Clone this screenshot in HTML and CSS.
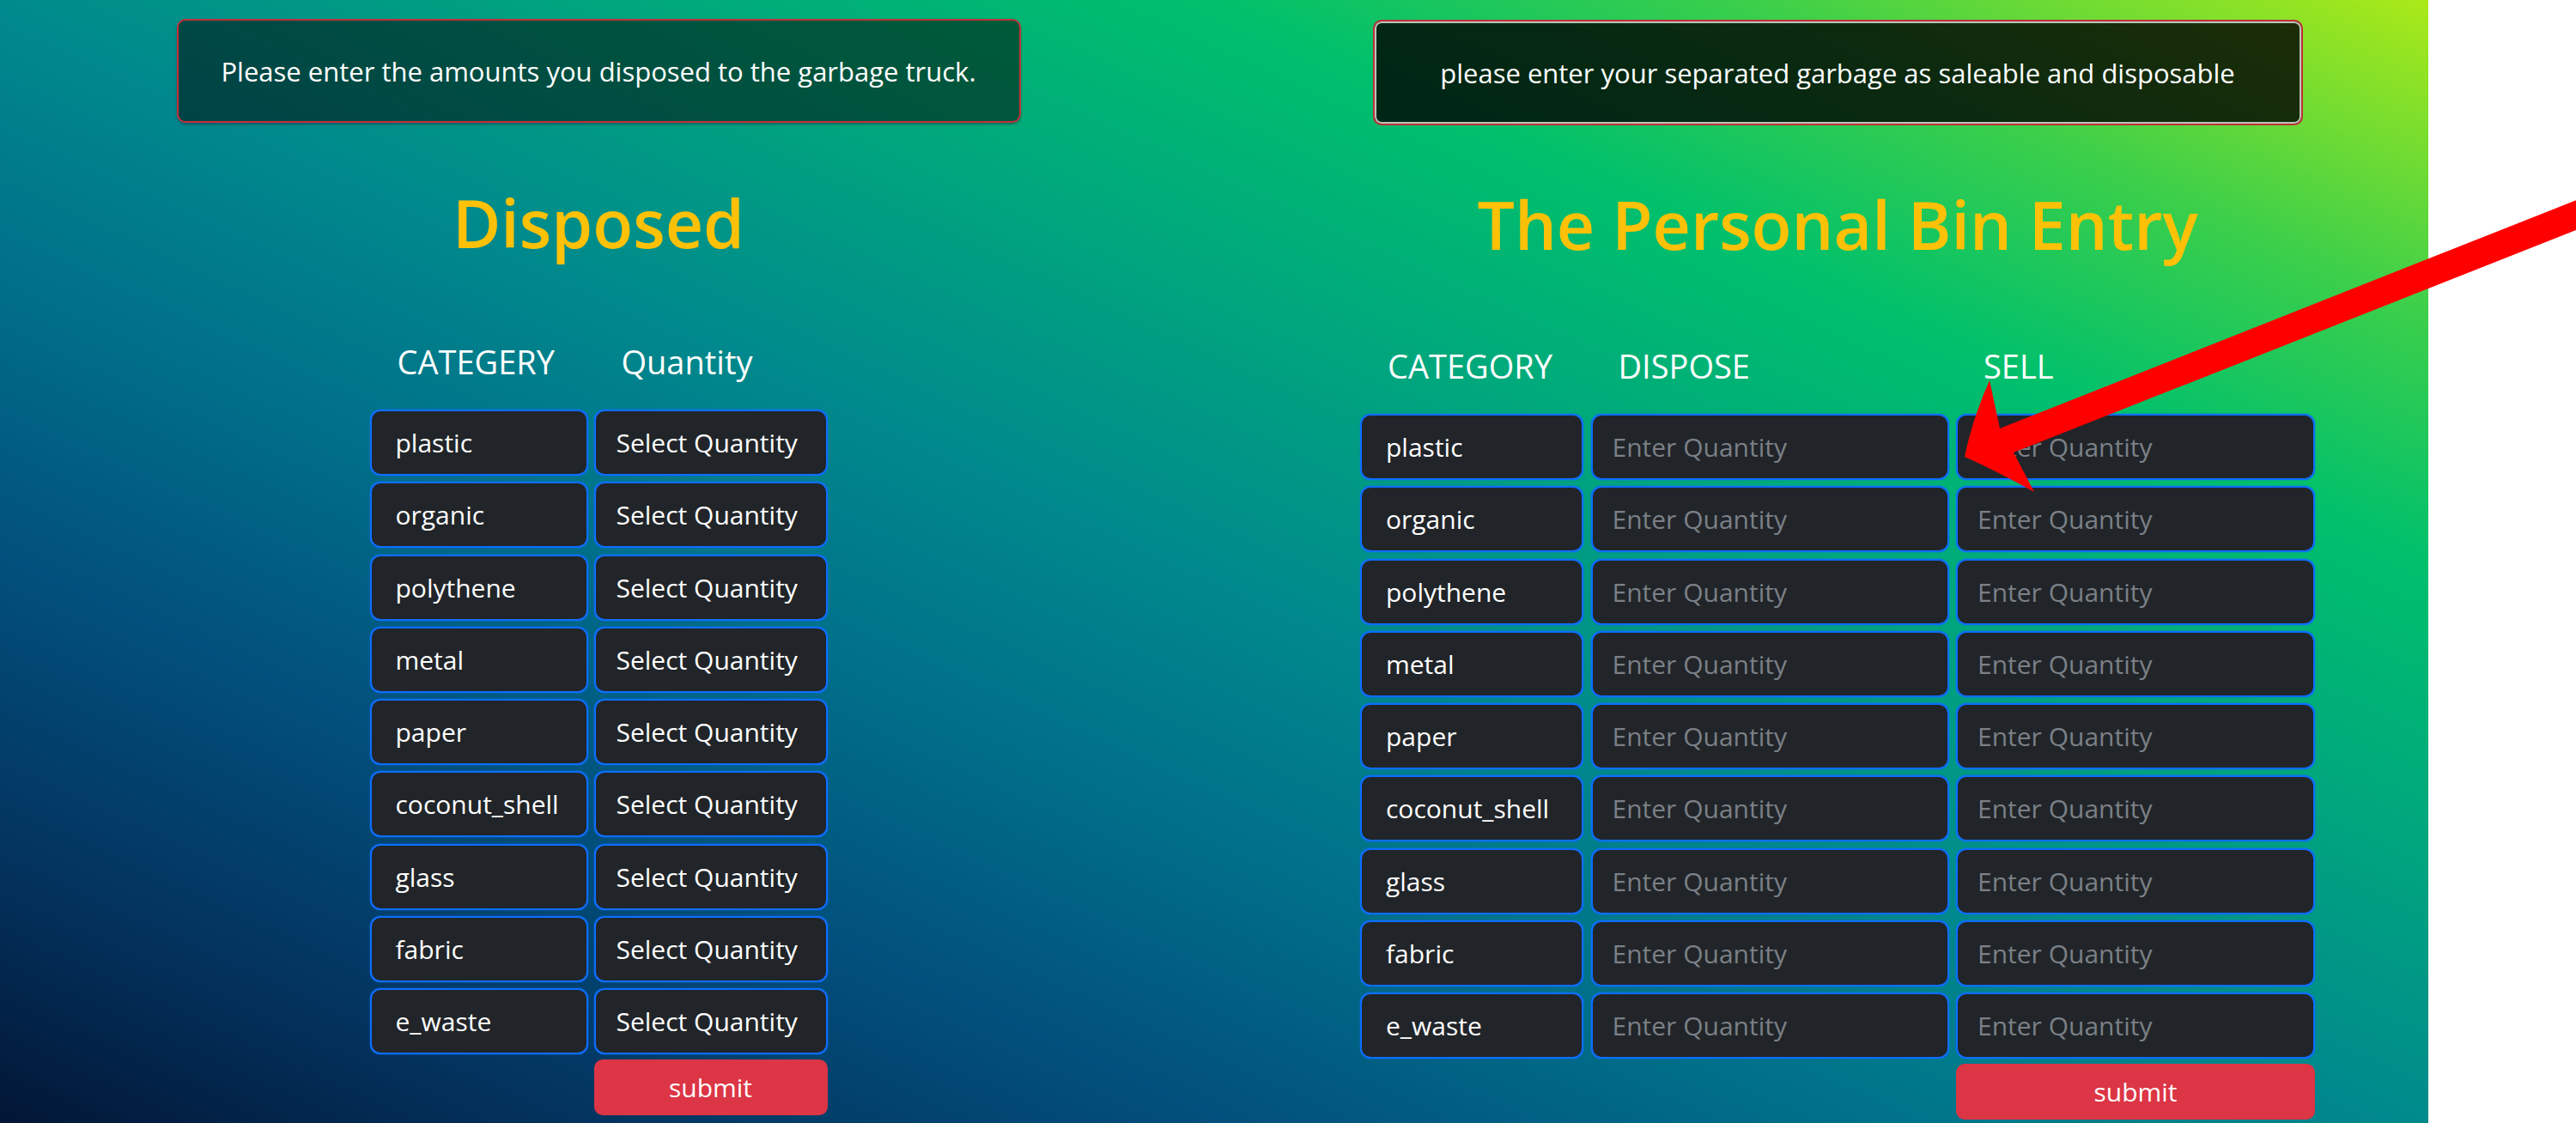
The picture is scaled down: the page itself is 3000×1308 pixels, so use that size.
FILE: index.html
```html
<!DOCTYPE html>
<html lang="en">
<head>
<meta charset="utf-8">
<title>Garbage Entry</title>
<link rel="stylesheet" href="styles.css">
</head>
<body>
<div class="page">
  <main class="canvas">
    <section class="col col-left">
      <div class="notice notice-left">Please enter the amounts you disposed to the garbage truck.</div>
      <h1 class="title title-left">Disposed</h1>
      <div class="tbl tbl-left">
        <div class="th">CATEGERY</div>
        <div class="th">Quantity</div>

        <div class="cell cat">plastic</div><div class="cell qty">Select Quantity</div>
        <div class="cell cat">organic</div><div class="cell qty">Select Quantity</div>
        <div class="cell cat">polythene</div><div class="cell qty">Select Quantity</div>
        <div class="cell cat">metal</div><div class="cell qty">Select Quantity</div>
        <div class="cell cat">paper</div><div class="cell qty">Select Quantity</div>
        <div class="cell cat">coconut_shell</div><div class="cell qty">Select Quantity</div>
        <div class="cell cat">glass</div><div class="cell qty">Select Quantity</div>
        <div class="cell cat">fabric</div><div class="cell qty">Select Quantity</div>
        <div class="cell cat">e_waste</div><div class="cell qty">Select Quantity</div>

        <button class="submit submit-left" type="button">submit</button>
      </div>
    </section>

    <section class="col col-right">
      <div class="notice notice-right">please enter your separated garbage as saleable and disposable</div>
      <h1 class="title title-right">The Personal Bin Entry</h1>
      <div class="tbl tbl-right">
        <div class="th">CATEGORY</div>
        <div class="th">DISPOSE</div>
        <div class="th">SELL</div>

        <div class="cell cat">plastic</div><input class="cell inp" placeholder="Enter Quantity"><input class="cell inp" placeholder="Enter Quantity">
        <div class="cell cat">organic</div><input class="cell inp" placeholder="Enter Quantity"><input class="cell inp" placeholder="Enter Quantity">
        <div class="cell cat">polythene</div><input class="cell inp" placeholder="Enter Quantity"><input class="cell inp" placeholder="Enter Quantity">
        <div class="cell cat">metal</div><input class="cell inp" placeholder="Enter Quantity"><input class="cell inp" placeholder="Enter Quantity">
        <div class="cell cat">paper</div><input class="cell inp" placeholder="Enter Quantity"><input class="cell inp" placeholder="Enter Quantity">
        <div class="cell cat">coconut_shell</div><input class="cell inp" placeholder="Enter Quantity"><input class="cell inp" placeholder="Enter Quantity">
        <div class="cell cat">glass</div><input class="cell inp" placeholder="Enter Quantity"><input class="cell inp" placeholder="Enter Quantity">
        <div class="cell cat">fabric</div><input class="cell inp" placeholder="Enter Quantity"><input class="cell inp" placeholder="Enter Quantity">
        <div class="cell cat">e_waste</div><input class="cell inp" placeholder="Enter Quantity"><input class="cell inp" placeholder="Enter Quantity">

        <button class="submit submit-right" type="button">submit</button>
      </div>
    </section>
  </main>
  <aside class="gutter"></aside>

  <svg class="arrow" width="3000" height="1308" viewBox="0 0 3000 1308" aria-hidden="true">
    <path d="M2288 532 Q2297 488 2317 443 L2329 499 L3026 223 L3038 253 L2345 527 L2369 573 Q2326 549 2288 532 Z" fill="#ff0000"/>
  </svg>
</div>
</body>
</html>
```

FILE: styles.css
```css
* { box-sizing: border-box; }

html, body {
  margin: 0;
  padding: 0;
  background: #ffffff;
}

body {
  font-family: "Open Sans", "Noto Sans", "Liberation Sans", sans-serif;
  color: #ffffff;
}

.page {
  position: relative;
  display: flex;
  width: 3000px;
  height: 1308px;
  overflow: hidden;
}

.canvas {
  width: 2828px;
  height: 1308px;
  flex: none;
  display: grid;
  grid-template-columns: 1394px 1fr;
  background: linear-gradient(to top right,
    #021636 0%,
    #03335e 12%,
    #024f7c 25%,
    #00708a 38%,
    #008a8c 50%,
    #00a57e 62%,
    #00c06c 75%,
    #3ccf4a 86%,
    #abe918 100%);
}

.gutter {
  flex: 1;
  background: #ffffff;
}

.col {
  display: flex;
  flex-direction: column;
  align-items: center;
}

.col-left { padding-top: 22px; }
.col-right { padding-top: 23px; padding-left: 58px; }

.notice {
  display: flex;
  align-items: center;
  justify-content: center;
  font-size: 31px;
  border-radius: 10px;
  border: 2px solid #c0303a;
  color: #ffffff;
}

.notice-left {
  width: 983px;
  height: 121px;
  background: rgba(0, 0, 0, 0.5);
  box-shadow: 0 2px 3px rgba(40, 0, 40, 0.35);
}

.notice-right {
  width: 1083px;
  height: 123px;
  background: rgba(0, 0, 0, 0.8);
  box-shadow: inset 0 0 0 2px #b9c6b8;
}

.title {
  margin: 0;
  font-size: 77px;
  line-height: 92px;
  font-weight: 600;
  color: #ffc107;
}

.title-left { margin-top: 71px; }
.title-right { margin-top: 70px; }

.tbl {
  display: grid;
  row-gap: 7.3px;
}

.tbl-left {
  margin-top: 91px;
  grid-template-columns: 254px 272px;
  column-gap: 7px;
}

.tbl-right {
  margin-top: 94px;
  grid-template-columns: 260px 417px 418px;
  column-gap: 8.5px;
}

.th {
  font-size: 38px;
  line-height: 48px;
  padding-left: 32px;
  margin-bottom: 24.7px;
  color: #ffffff;
  white-space: nowrap;
}

.cell {
  height: 77px;
  margin: 0;
  display: flex;
  align-items: center;
  background: #212529;
  border: 2px solid #0d6efd;
  border-radius: 12px;
  box-shadow: 0 0 2px rgba(13, 110, 253, 0.9);
  color: #ffffff;
  font-family: inherit;
  font-size: 30px;
  white-space: nowrap;
}

.cat { padding-left: 28px; }
.qty { padding-left: 24px; }

.inp {
  width: 100%;
  padding: 0 0 0 23px;
  outline: none;
}

.inp::placeholder {
  color: #7b8087;
  opacity: 1;
}

.submit {
  height: 65px;
  margin-top: -1.3px;
  border: none;
  border-radius: 10px;
  background: #dc3545;
  color: #ffffff;
  font-family: inherit;
  font-size: 30px;
  padding: 0;
  cursor: pointer;
}

.submit-left { grid-column: 2; }
.submit-right { grid-column: 3; margin-top: -1.8px; }

.arrow {
  position: absolute;
  top: 0;
  left: 0;
  pointer-events: none;
}
```
